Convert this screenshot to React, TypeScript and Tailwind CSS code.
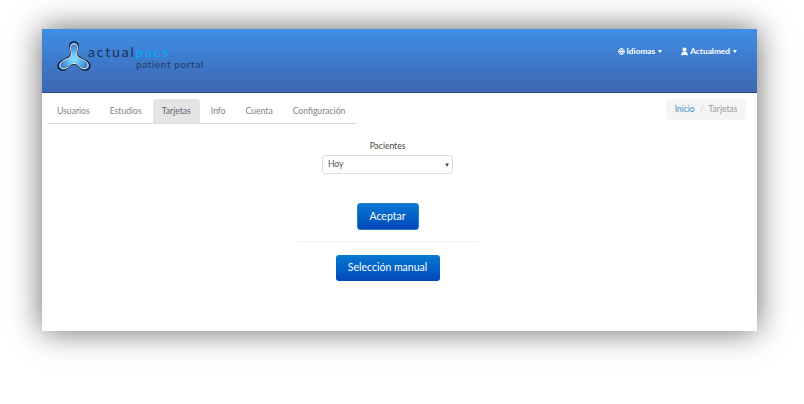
import React from "react";
import { Globe, User } from "lucide-react";

const TABS = ["Usuarios", "Estudios", "Tarjetas", "Info", "Cuenta", "Configuración"];

// outline of the three-armed logo mark
const MARK =
  "M17 .8c-2.800 0-4.500 2-4.200 4.500.3 3 1.700 5.500.7 8.500-1 2.700-3.500 3.700-6.500 5-3 1.200-6 3-6 6 0 3 3 5 6 4.200 3-.8 5-3.500 7-5 1.800-1.300 4.200-1.300 6 0 2 1.500 4 4.200 7 5 3 .8 6-1.200 6-4.200 0-3-3-4.800-6-6-3-1.300-5.500-2.300-6.500-5-1-3 .4-5.500.7-8.500.3-2.500-1.400-4.500-4.200-4.500z";

function Caret() {
  return <span className="ml-[3px] inline-block border-x-[2.500px] border-t-[3px] border-x-transparent border-t-white align-middle" />;
}

function Logo() {
  return (
    <svg width="34" height="30" viewBox="0 0 34 30" fill="none" className="shrink-0">
      <defs>
        <radialGradient id="markFill" cx="17" cy="18" r="15" gradientUnits="userSpaceOnUse">
          <stop offset="0" stopColor="#8fe2ff" />
          <stop offset="0.5" stopColor="#55b4f4" />
          <stop offset="1" stopColor="#3a78c4" />
        </radialGradient>
      </defs>
      <path d={MARK} fill="url(#markFill)" stroke="#0b0f18" strokeWidth="1.300" />
      <path d={MARK} stroke="#ffffff" strokeWidth="1" transform="translate(17 18) scale(0.88) translate(-17 -18)" />
    </svg>
  );
}

export default function App() {
  return (
    <div className="h-[404px] w-[804px] overflow-hidden bg-white pl-[42px] pt-[29px] font-['Lato','Open_Sans',sans-serif]">
      <div className="h-[302px] w-[715px] bg-white shadow-[0_0_30px_rgba(0,0,0,0.6)]">
        {/* Navbar */}
        <header className="flex h-[64px] items-start justify-between border-b border-b-[#2f4b84] bg-gradient-to-b from-[#3f8ee6] to-[#3c67b1] pl-[15px] pr-[20px]">
          <div className="mt-[12px] flex">
            <Logo />
            <div className="ml-[-3px] mt-[4px] leading-none">
              <div className="text-[14px] leading-[14px] tracking-[1.800px] text-[#1c3157]">
                actual<span className="text-[#00aaff]">pacs</span>
              </div>
              <div className="ml-[48px] text-[10px] leading-[10px] tracking-[0.600px] text-[#24395f]">patient portal</div>
            </div>
          </div>
          <nav className="mt-[16px] flex items-center gap-[18px] text-[8.300px] font-bold leading-[12px] text-white">
            <span className="flex items-center">
              <Globe size={7} strokeWidth={3} className="mr-[1.500px]" />
              Idiomas
              <Caret />
            </span>
            <span className="flex items-center">
              <User size={9} strokeWidth={3} fill="white" className="mr-[1px]" />
              Actualmed
              <Caret />
            </span>
          </nav>
        </header>

        {/* Tabs and breadcrumb */}
        <div className="flex items-start justify-between pl-[5px] pr-[11px] pt-[6px]">
          <ul className="flex h-[25px] w-[310px] border-b border-b-[#dddddd] text-[8.600px]">
            {TABS.map((tab) => (
              <li
                key={tab}
                className={
                  tab === "Tarjetas"
                    ? "mx-[1px] flex h-[24px] items-center rounded-t-[3px] bg-[#e4e4e4] px-[9px] text-[#5d6670]"
                    : "mx-[1px] flex h-[24px] items-center px-[9px] text-[#7c8288]"
                }
              >
                {tab}
              </li>
            ))}
          </ul>
          <div className="flex h-[21px] w-[80px] items-center justify-center rounded-[3px] bg-[#f5f5f5] text-[8.500px]">
            <span className="text-[#428bca]">Inicio</span>
            <span className="mx-[5px] text-[#cccccc]">/</span>
            <span className="text-[#999999]">Tarjetas</span>
          </div>
        </div>

        {/* Form */}
        <main className="mr-[24px] mt-[16px] flex flex-col items-center">
          <label className="text-[8.500px] leading-[13px] text-[#444444]">Pacientes</label>
          <div className="mt-[2px] flex h-[19px] w-[131px] items-center justify-between rounded-[3px] border border-[#dddddd] bg-white pl-[5px] pr-[2px] text-[8.500px] text-[#555555]">
            Hoy
            <span className="text-[6px] text-[#444444]">▼</span>
          </div>
          <button className="mt-[29px] h-[27px] w-[62px] rounded-[3px] border border-[#2a7fc4] bg-gradient-to-b from-[#0a78d2] to-[#0448bb] text-[10.500px] text-white">
            Aceptar
          </button>
          <hr className="mt-[11px] w-[180px] border-[#eeeeee]" />
          <button className="mt-[13px] h-[26px] w-[104px] rounded-[3px] bg-gradient-to-b from-[#0a78d2] to-[#0448bb] text-[10.500px] text-white">
            Selección manual
          </button>
        </main>
      </div>
    </div>
  );
}
